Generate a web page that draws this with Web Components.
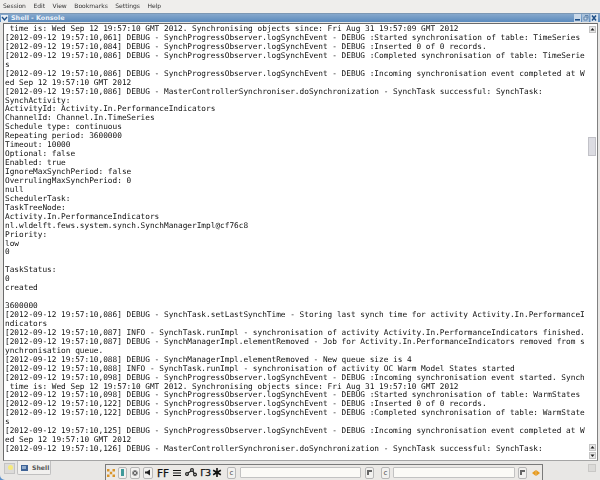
<!DOCTYPE html>
<html>
<head>
<meta charset="utf-8">
<style>
  html, body { margin: 0; height: 480px; overflow: hidden; background: #efeeec; }
</style>
</head>
<body>
<konsole-window>
  <menu-bar slot="menu"></menu-bar>
  <title-bar slot="title">Shell - Konsole</title-bar>
  <log-view slot="log"></log-view>
  <tray-bar slot="tray"></tray-bar>
</konsole-window>

<script>
const LOG = [
  ' time is: Wed Sep 12 19:57:10 GMT 2012. Synchronising objects since: Fri Aug 31 19:57:09 GMT 2012',
  '[2012-09-12 19:57:10,061] DEBUG - SynchProgressObserver.logSynchEvent - DEBUG :Started synchronisation of table: TimeSeries',
  '[2012-09-12 19:57:10,084] DEBUG - SynchProgressObserver.logSynchEvent - DEBUG :Inserted 0 of 0 records.',
  '[2012-09-12 19:57:10,086] DEBUG - SynchProgressObserver.logSynchEvent - DEBUG :Completed synchronisation of table: TimeSerie',
  's',
  '[2012-09-12 19:57:10,086] DEBUG - SynchProgressObserver.logSynchEvent - DEBUG :Incoming synchronisation event completed at W',
  'ed Sep 12 19:57:10 GMT 2012',
  '[2012-09-12 19:57:10,086] DEBUG - MasterControllerSynchroniser.doSynchronization - SynchTask successful: SynchTask:',
  'SynchActivity:',
  'ActivityId: Activity.In.PerformanceIndicators',
  'ChannelId: Channel.In.TimeSeries',
  'Schedule type: continuous',
  'Repeating period: 3600000',
  'Timeout: 10000',
  'Optional: false',
  'Enabled: true',
  'IgnoreMaxSynchPeriod: false',
  'OverrulingMaxSynchPeriod: 0',
  'null',
  'SchedulerTask:',
  'TaskTreeNode:',
  'Activity.In.PerformanceIndicators',
  'nl.wldelft.fews.system.synch.SynchManagerImpl@cf76c8',
  'Priority:',
  'low',
  '0',
  '',
  'TaskStatus:',
  '0',
  'created',
  '',
  '3600000',
  '[2012-09-12 19:57:10,086] DEBUG - SynchTask.setLastSynchTime - Storing last synch time for activity Activity.In.PerformanceI',
  'ndicators',
  '[2012-09-12 19:57:10,087] INFO - SynchTask.runImpl - synchronisation of activity Activity.In.PerformanceIndicators finished.',
  '[2012-09-12 19:57:10,087] DEBUG - SynchManagerImpl.elementRemoved - Job for Activity.In.PerformanceIndicators removed from s',
  'ynchronisation queue.',
  '[2012-09-12 19:57:10,088] DEBUG - SynchManagerImpl.elementRemoved - New queue size is 4',
  '[2012-09-12 19:57:10,088] INFO - SynchTask.runImpl - synchronisation of activity OC Warm Model States started',
  '[2012-09-12 19:57:10,098] DEBUG - SynchProgressObserver.logSynchEvent - DEBUG :Incoming synchronisation event started. Synch',
  ' time is: Wed Sep 12 19:57:10 GMT 2012. Synchronising objects since: Fri Aug 31 19:57:10 GMT 2012',
  '[2012-09-12 19:57:10,098] DEBUG - SynchProgressObserver.logSynchEvent - DEBUG :Started synchronisation of table: WarmStates',
  '[2012-09-12 19:57:10,122] DEBUG - SynchProgressObserver.logSynchEvent - DEBUG :Inserted 0 of 0 records.',
  '[2012-09-12 19:57:10,122] DEBUG - SynchProgressObserver.logSynchEvent - DEBUG :Completed synchronisation of table: WarmState',
  's',
  '[2012-09-12 19:57:10,125] DEBUG - SynchProgressObserver.logSynchEvent - DEBUG :Incoming synchronisation event completed at W',
  'ed Sep 12 19:57:10 GMT 2012',
  '[2012-09-12 19:57:10,126] DEBUG - MasterControllerSynchroniser.doSynchronization - SynchTask successful: SynchTask:'
];

class KonsoleWindow extends HTMLElement {
    constructor() {
        super();
        this.attachShadow({ mode: 'open' }).innerHTML = `
          <style>
            :host { display: flex; flex-direction: column; width: 600px; height: 480px; font-family: "DejaVu Sans", sans-serif; }
            .frame { flex: 1; display: flex; flex-direction: column; min-height: 0; padding: 0 2px 0 3px; background: #e8e7e5; }
          </style>
          <slot name="menu"></slot>
          <div class="frame">
            <slot name="title"></slot>
            <slot name="log"></slot>
          </div>
          <slot name="tray"></slot>
        `;
    }
}

class MenuBar extends HTMLElement {
    constructor() {
        super();
        const items = ['Session', 'Edit', 'View', 'Bookmarks', 'Settings', 'Help'];
        this.attachShadow({ mode: 'open' }).innerHTML = `
          <style>
            :host { display: flex; height: 13px; padding-left: 3px; gap: 7.5px; background: #efeeec; color: #333;
                    font: 6px/12px "DejaVu Sans", sans-serif; }
            span { filter: blur(.25px); }
          </style>
          ${items.map(i => `<span>${i}</span>`).join('')}
        `;
    }
}

class TitleBar extends HTMLElement {
    constructor() {
        super();
        this.attachShadow({ mode: 'open' }).innerHTML = `
          <style>
            :host { display: flex; align-items: center; height: 9px; margin: 0 -2px 0 -3px; padding: 0 2px 0 1px; gap: 3px; color: #eaf1f8;
                    background: linear-gradient(#86a8cc, #5a8abd); border-top: 1px solid #7d98b4; box-sizing: border-box; font: bold 6.4px/8px "DejaVu Sans", sans-serif; }
            .grow { flex: 1; }
            svg { display: block; }
          </style>
          <svg width="7" height="7" viewBox="0 0 7 7"><rect width="7" height="7" fill="#e6edf4"/><path d="M1 2l2.5 3L6 2" fill="none" stroke="#1d4e86" stroke-width="1.4"/></svg>
          <slot></slot>
          <span class="grow"></span>
          <svg width="24" height="8" viewBox="0 0 24 8">
            <rect x="0" width="7" height="8" fill="#c9d8e8"/><rect x="1" y="5" width="5" height="1.6" fill="#1d4e86"/>
            <rect x="8" width="7" height="8" fill="#a9c1da"/><path d="M10 3h3v3h-3z" fill="#cfdcea" stroke="#5f83ab"/><path d="M11 1.5h3v3" fill="none" stroke="#5f83ab"/>
            <rect x="16.500" width="7.500" height="8" fill="#d9e4ef"/><path d="M18 1.500l4 5m0-5l-4 5" stroke="#1d4e86" stroke-width="1.500"/>
          </svg>
        `;
    }
}

class LogView extends HTMLElement {
    constructor() {
        super();
        const sheet = document.createElement('template');
        sheet.innerHTML = `
          <style>
            :host { position: relative; flex: 1; display: flex; min-height: 0; margin-top: 1px; background: #fff; border: 1px solid #6a6a6a; border-right-color: #808080; border-bottom-color: #a5a5a5; }
            pre { flex: 1; min-width: 0; margin: 0; padding: 1px 0 0 1px; overflow: hidden; color: #111;
                  font: 7.77px/8.93px "DejaVu Sans Mono", monospace; filter: blur(.3px); }
            .bar { position: relative; flex: none; width: 9px; display: flex; flex-direction: column; justify-content: space-between; padding: 2px 1px 0 1px; box-sizing: border-box; }
            .arrow { display: block; width: 7px; height: 7px; box-sizing: border-box; border: 1px solid #c4c4c4; background: #e8e8e8; margin-bottom: 1px; }
            .arrow svg { display: block; }
            .thumb { position: absolute; left: 0; top: 113px; width: 8px; height: 19px; box-sizing: border-box; border: 1px solid #c2c2c8; background: #dcdce2; }
            .stack { display: flex; flex-direction: column; }
          </style>
          <pre></pre>
          <div class="bar">
            <span class="arrow"><svg width="5" height="5" viewBox="0 0 5 5"><path d="M.5 3.500h4L2.500 1z" fill="#222"/></svg></span>
            <span class="thumb"></span>
            <div class="stack">
              <span class="arrow"><svg width="5" height="5" viewBox="0 0 5 5"><path d="M.5 3.500h4L2.500 1z" fill="#222"/></svg></span>
              <span class="arrow"><svg width="5" height="5" viewBox="0 0 5 5"><path d="M.5 1.500h4L2.500 4z" fill="#222"/></svg></span>
            </div>
          </div>
        `;
        const root = this.attachShadow({ mode: 'open' });
        root.appendChild(sheet.content.cloneNode(true));
        root.querySelector('pre').textContent = LOG.join('\n');
    }
}

class TrayBar extends HTMLElement {
    constructor() {
        super();
        this.attachShadow({ mode: 'open' }).innerHTML = `
          <style>
            :host { position: relative; display: flex; height: 19px; background: #e8e7e5; box-sizing: border-box; font-family: "DejaVu Sans", sans-serif; color: #333; }
            .corner { position: absolute; left: 0; bottom: 0; display: block; }
            .tabs { display: flex; align-items: flex-start; width: 105px; flex: none; padding: 0 0 0 4px; box-sizing: border-box; }
            .desk { width: 11px; height: 11px; margin-top: 2px; padding: 1px 0 0 3px; background: #dcdbd9; border: 1px solid #c4c4c4; box-sizing: border-box; }
            .dot { display: block; width: 5px; height: 5px; border-radius: 50%; background: #f6ea7c; }
            .tab { display: flex; align-items: center; gap: 3px; width: 34px; height: 14px; margin-left: 2px; padding-left: 3px; box-sizing: border-box; font: bold 6.2px/14px "DejaVu Sans", sans-serif;
                   background: #f1f0ee; border: 1px solid #c0c0c0; border-top: 0; border-radius: 0 0 2px 2px; color: #555; }
            .tab svg { display: block; flex: none; }
            .panel { display: flex; align-items: center; width: 438px; flex: none; height: 16px; margin-top: 3px; box-sizing: border-box; background: #ebe9e6; border: 1px solid #7a7a7a; border-bottom: 0; color: #444; }
            .ic { flex: none; height: 12px; box-sizing: border-box; display: flex; align-items: center; justify-content: center; font-size: 7px; border: 1px solid #b8b8b8; border-radius: 2px; background: #f2f1ef; }
            .plain { border: 0; background: none; }
            .glyph { color: #111; font: 10.5px/12px "DejaVu Sans", sans-serif; -webkit-text-stroke: .25px #111; }
            .field { height: 11px; background: #fbfaf6; border: 1px solid #c2c2c2; box-sizing: border-box; border-radius: 1px; flex: none; }
            .grip { width: 8px; height: 8px; margin: 3px 4px 0 auto; box-sizing: border-box; background: #dbdad8; border: 1px solid #c9c8c6; }
          </style>
          <svg class="corner" width="5" height="5" viewBox="0 0 5 5"><path d="M0 0A5 5 0 0 0 5 5H0z" fill="#5a8fcb"/></svg>
          <div class="tabs">
            <span class="desk"><span class="dot"></span></span>
            <span class="tab"><svg width="8" height="8" viewBox="0 0 8 8"><rect y="1" width="7" height="6" fill="#3f6396"/><rect x="1" y="2" width="4" height="3" fill="#8faacb"/></svg>Shell</span>
          </div>
          <div class="panel">
            <span class="ic plain" style="width:8px;margin-left:1px"><svg width="8" height="8" viewBox="0 0 8 8" fill="#d9952a"><path d="M0 0h2.500v2.500H0zM5.500 0H8v2.500H5.500zM0 5.500h2.500V8H0zM5.500 5.500H8V8H5.500zM2.800 2.800h2.400v2.400H2.800z"/></svg></span>
            <span class="ic" style="width:9px;margin-left:3px"><svg width="3" height="7" viewBox="0 0 3 7"><rect width="3" height="7" fill="#3f9a9a"/></svg></span>
            <span class="ic" style="width:10px;margin-left:3px"><svg width="6" height="6" viewBox="0 0 6 6"><circle cx="3" cy="3" r="2.700" fill="#666"/><path d="M1.500 1.500l3 3m0-3l-3 3" stroke="#eee" stroke-width=".8"/></svg></span>
            <span class="ic" style="width:10px;margin-left:3px"><svg width="7" height="7" viewBox="0 0 7 7"><path d="M0 2.500h2L5 .5v6l-3-2H0z" fill="#222"/></svg></span>
            <span class="ic plain glyph" style="width:12px;margin-left:4px">FF</span>
            <span class="ic plain" style="width:8px;margin-left:4px"><svg width="8" height="6" viewBox="0 0 8 6"><path d="M0 .5h8M0 3h8M0 5.500h8" stroke="#111"/></svg></span>
            <span class="ic plain" style="width:12px;margin-left:4px"><svg width="12" height="9" viewBox="0 0 12 9" fill="none" stroke="#222" stroke-width="1.200"><circle cx="2" cy="6" r="1.400"/><circle cx="7" cy="2" r="1.400"/><circle cx="10" cy="6.500" r="1.400"/><path d="M3 5l3-2M8 3l1 2.500"/></svg></span>
            <span class="ic plain glyph" style="width:11px;margin-left:3px;font-size:9.5px;letter-spacing:-.5px">Γ3</span>
            <span class="ic plain" style="width:10px;margin-left:1px"><svg width="10" height="9" viewBox="0 0 10 10" stroke="#111" stroke-width="1.800"><path d="M5 0v10M.7 2.500l8.600 5M.7 7.500l8.600-5"/></svg></span>
            <span class="ic" style="width:9px;margin-left:5px">c</span>
            <span class="field" style="width:121px;margin-left:4px"></span>
            <span class="ic" style="width:9px;margin-left:4px"><svg width="5" height="5" viewBox="0 0 5 5"><path d="M0 0h5v2H2v3H0z" fill="#666"/></svg></span>
            <span class="ic" style="width:9px;margin-left:7px">c</span>
            <span class="field" style="width:122px;margin-left:3px"></span>
            <span class="ic" style="width:9px;margin-left:3px"><svg width="5" height="5" viewBox="0 0 5 5"><path d="M0 0h5v2H2v3H0z" fill="#666"/></svg></span>
            <span class="ic plain" style="width:8px;margin-left:5px"><svg width="8" height="6" viewBox="0 0 8 6" fill="#e79a1c"><path d="M0 3l3.800-3v6zM8 3L4.200 0v6z"/></svg></span>
          </div>
          <span class="grip"></span>
        `;
    }
}

customElements.define('konsole-window', KonsoleWindow);
customElements.define('menu-bar', MenuBar);
customElements.define('title-bar', TitleBar);
customElements.define('log-view', LogView);
customElements.define('tray-bar', TrayBar);
</script>
</body>
</html>
